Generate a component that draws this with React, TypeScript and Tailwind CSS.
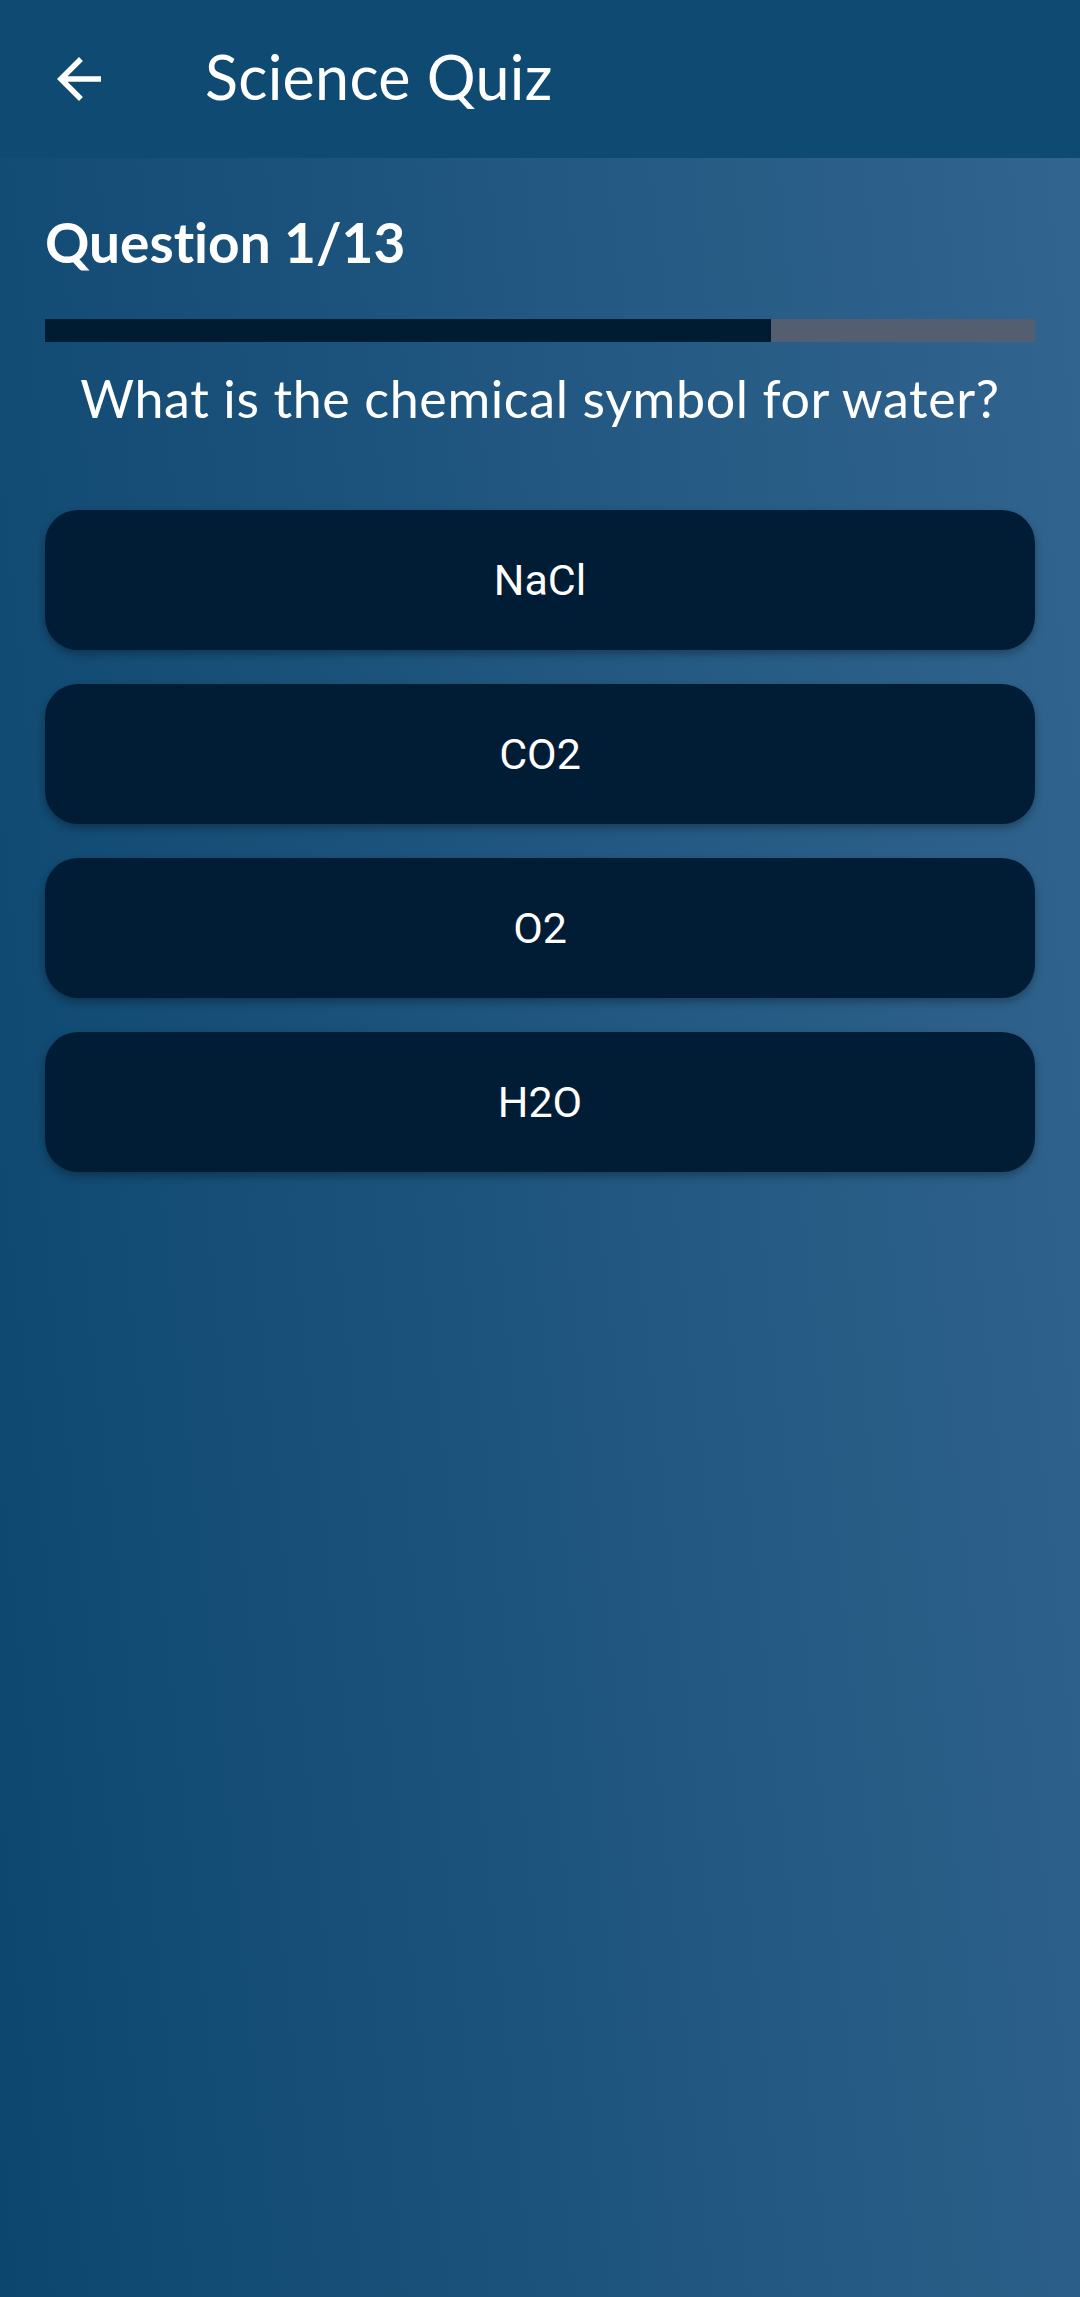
import React from "react";

const answers = ["NaCl", "CO2", "O2", "H2O"];

const App: React.FC = () => {
  const [selected, setSelected] = React.useState<string | null>(null);
  const progress = 73.3;

  return (
    <div className="min-h-[2297px] w-full bg-linear-[84deg] from-[#0c466e] to-[#32658f] font-['Lato','Noto_Sans',sans-serif] text-white [font-variant-ligatures:none]">
      {/* Header */}
      <div className="flex h-[158px] items-center bg-[#0f4a72]">
        <button className="ml-[46px] flex h-[66px] w-[66px] items-center justify-center">
          <svg viewBox="0 0 24 24" className="h-[66px] w-[66px]" fill="white">
            <path d="M20 11H7.83l5.59-5.59L12 4l-8 8 8 8 1.41-1.41L7.83 13H20v-2z" />
          </svg>
        </button>
        <h1 className="mb-[5px] ml-[93px] text-[61px] leading-none tracking-[0.3px]">
          Science Quiz
        </h1>
      </div>

      {/* Content */}
      <div className="px-[45px]">
        <h2 className="mt-[51px] text-[55px] font-bold leading-[66px]">
          Question 1/13
        </h2>

        <div className="mt-[44px] flex h-[23px] w-full bg-[#535f70]">
          <div className="h-full bg-[#001c33]" style={{ width: `${progress}%` }} />
        </div>

        <p className="mt-[22px] text-center text-[52px] font-normal leading-[68px] tracking-[0.6px]">
          What is the chemical symbol for water?
        </p>

        <div className="mt-[78px] flex flex-col gap-[34px]">
          {answers.map((a) => (
            <button
              key={a}
              onClick={() => setSelected(a)}
              className={`flex h-[140px] w-full items-center justify-center rounded-[33px] font-['Roboto',sans-serif] text-[43px] font-normal text-white shadow-[0_4px_8px_rgba(0,0,0,0.3)] ${
                selected === a ? "bg-[#002a4a]" : "bg-[#001d35]"
              }`}
            >
              {a}
            </button>
          ))}
        </div>
      </div>
    </div>
  );
};

export default App;
